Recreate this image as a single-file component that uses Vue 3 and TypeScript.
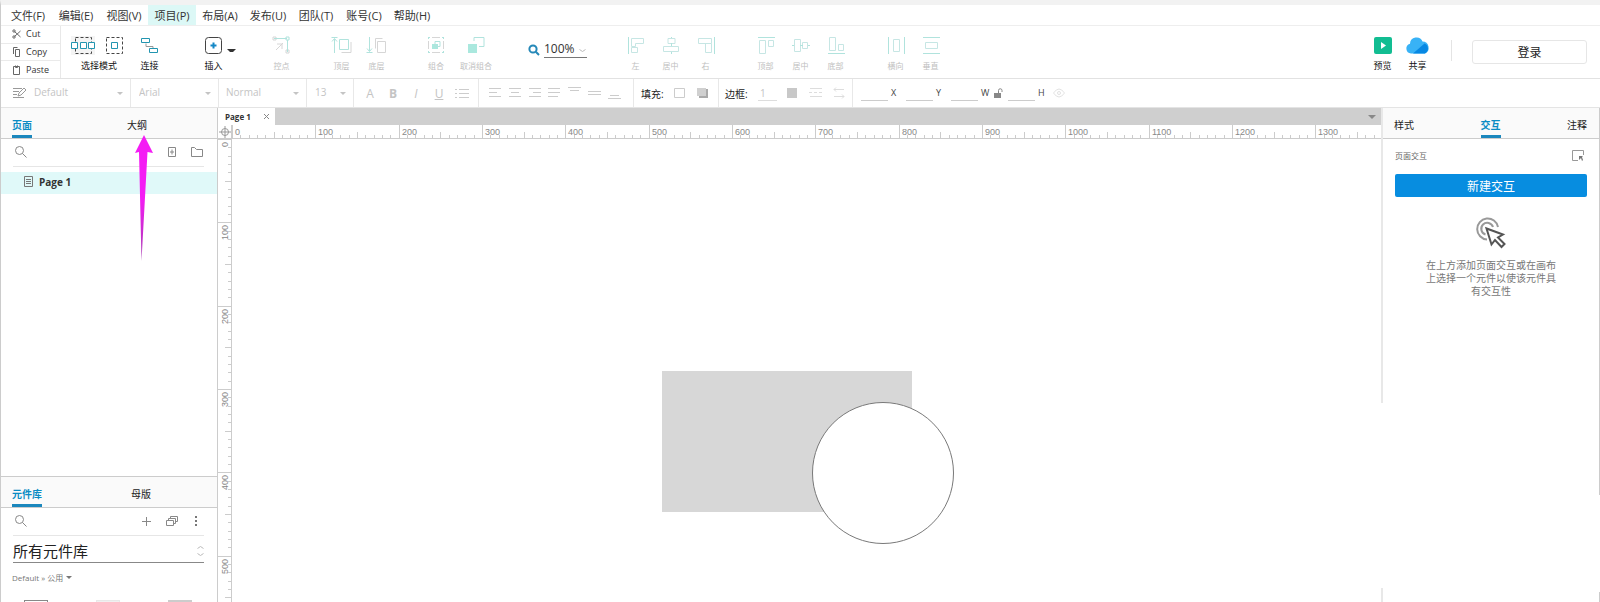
<script setup lang="ts">
import { computed, onBeforeUnmount, onMounted, ref } from 'vue'

interface Tool { label: string; main: string; soft?: string; fill?: string }
interface ToolGroup { name: string; tools: Tool[] }

const menus: string[] = ['文件(F)', '编辑(E)', '视图(V)', '项目(P)', '布局(A)', '发布(U)', '团队(T)', '账号(C)', '帮助(H)']
const activeMenu = ref(3)

const groups: ToolGroup[] = [
  { name: 'point', tools: [
    { label: '控点', main: 'M4 2.5h13M17.5 4v12M16 1h3v3h-3z', soft: 'M6 14l7-7M7 8l5 0 0 5M3 1h3v3H3zM16 14h3v3h-3z' },
  ] },
  { name: 'order', tools: [
    { label: '顶层', main: 'M4.5 17V3M2 5.5l2.5-3 2.500 3M1.500 1.500h6M9.500 3.500h9v10h-9z', soft: 'M11.500 16.500h9.500V6' },
    { label: '底层', main: 'M4.500 1v14M2 12.500l2.500 3 2.500-3M1.500 16.500h6', soft: 'M10.500 12.500V2.500h7M12.500 5.500h8v11h-8z' },
  ] },
  { name: 'combine', tools: [
    { label: '组合', main: 'M4 1.500h2M18 1.500h2M4 16.500h2M18 16.500h2M4.500 1v2M19.500 1v2M4.500 15v2M19.500 15v2M11 5.500h5v5h-5z', soft: 'M8 1.500h8M8 16.500h8M4.500 5v8M19.500 5v8', fill: 'M8 8h6v5H8z' },
    { label: '取消组合', main: 'M10 5V1.500h10v9h-5', fill: 'M4 8h9v9H4z' },
  ] },
]

const alignGroups: ToolGroup[] = [
  { name: 'halign', tools: [
    { label: '左', main: 'M4.500 1v17', soft: 'M7.500 2.500h12v5h-8v3h-4zM7.500 11.500h6v5h-6z' },
    { label: '居中', main: 'M12.500 1v1M12.500 7v3M12.500 16v2', soft: 'M9 2.500h7v5H9zM4.500 10.500h15v5h-15z' },
    { label: '右', main: 'M20.500 1v17', soft: 'M4.500 2.500h13v5h-13zM11.500 7.500v9h6v-9' },
  ] },
  { name: 'valign', tools: [
    { label: '顶部', main: 'M4 1.500h17', soft: 'M5.500 4.500h6v13h-6zM14.500 4.500h5v6h-5z' },
    { label: '居中', main: 'M3 9.500h2M11 9.500h3M19 9.500h2', soft: 'M5.500 3.500h6v12h-6zM13.500 6.500h5v6h-5z' },
    { label: '底部', main: 'M4 17.500h17', soft: 'M5.500 1.500h6v13h-6zM14.500 8.500h5v6h-5z' },
  ] },
  { name: 'spread', tools: [
    { label: '横向', main: 'M4.500 1v17M20.500 1v17', soft: 'M9.500 3.500h6v12h-6z' },
    { label: '垂直', main: 'M4 1.500h17M4 17.500h17', soft: 'M6.500 6.500h12v6h-12z' },
  ] },
]

const textAligns: string[] = [
  'M0 1.500h12M0 5.500h8M0 9.500h12',
  'M0 1.500h12M2 5.500h8M0 9.500h12',
  'M0 1.500h12M4 5.500h8M0 9.500h12',
  'M0 1.500h12M0 5.500h12M0 9.500h10',
]
const verticalAligns: string[] = ['M0 .5h13M2 3.500h9', 'M0 4.500h13M0 7.500h13', 'M2 8.500h9M0 11.500h13']
const dimensions: string[] = ['X', 'Y', 'W', 'H']

const STEP = 250 / 3
interface Mark { at: number; size: number; label: string }

function marksFor(length: number): Mark[] {
  const count = Math.ceil((length * 10) / STEP)
  return Array.from({ length: count }, (_, i) => {
    const at = Math.round((i * STEP) / 10)
    return {
      at,
      size: i % 10 === 0 ? 14 : i % 5 === 0 ? 7 : 4,
      label: i % 10 === 0 && at + 28 < length ? String(i * 10) : '',
    }
  })
}

const canvas = ref<HTMLElement | null>(null)
const canvasWidth = ref(0)
const canvasHeight = ref(0)
const columns = computed(() => marksFor(canvasWidth.value))
const rows = computed(() => marksFor(canvasHeight.value))

function measure(): void {
  canvasWidth.value = canvas.value?.clientWidth ?? 0
  canvasHeight.value = canvas.value?.clientHeight ?? 0
}
onMounted(() => {
  measure()
  window.addEventListener('resize', measure)
})
onBeforeUnmount(() => window.removeEventListener('resize', measure))

const leftTab = ref('页面')
const libTab = ref('元件库')
const rightTab = ref('交互')
const rightTabs: string[] = ['样式', '交互', '注释']
</script>

<template>
  <div class="app">
    <nav class="menubar">
      <button v-for="(m, i) in menus" :key="m" :class="{ active: i === activeMenu }" @click="activeMenu = i">{{ m }}</button>
    </nav>

    <div class="toolbar">
      <div class="clipboard">
        <button>
          <svg width="10" height="10" viewBox="0 0 10 10"><path d="M2.500 2.500l6 5.500M2.500 7.500l6-5.500" /><circle cx="2" cy="2" r="1.200" /><circle cx="2" cy="8" r="1.200" /></svg>Cut
        </button>
        <button>
          <svg width="10" height="10" viewBox="0 0 10 10"><path d="M3.500 2.500h4v7h-4zM1.500 7V.500h4" /></svg>Copy
        </button>
        <button>
          <svg width="10" height="10" viewBox="0 0 10 10"><path d="M1.500 1.500h6v8h-6zM3.500 .500v2h2v-2" /></svg>Paste
        </button>
      </div>

      <div class="modes">
        <div class="mode-icons">
          <button class="chosen" aria-label="相交选中">
            <svg width="24" height="19" viewBox="0 0 24 19">
              <path class="ink dash" d="M4.500 1.500h16v16h-16z" />
              <path class="blue solid" d="M.5 6.500h6v6h-6zM9.500 6.500h6v6h-6zM17.500 6.500h6v6h-6z" />
            </svg>
          </button>
          <button aria-label="包含选中">
            <svg width="18" height="19" viewBox="0 0 18 19">
              <path class="ink dash" d="M.5 1.500h16v16H.5z" />
              <path class="blue" d="M5.500 6.500h6v6h-6z" />
            </svg>
          </button>
        </div>
        <span>选择模式</span>
      </div>
      <button class="tool dark">
        <svg width="24" height="19" viewBox="0 0 24 19">
          <path class="ink thin" d="M8 7.500v3h7v2" />
          <path class="blue" d="M3.500 2.500h8v4h-8zM11.500 12.500h8v4h-8z" />
        </svg>
        <span>连接</span>
      </button>
      <div class="insert">
        <button class="tool dark">
          <svg width="24" height="19" viewBox="0 0 24 19">
            <rect class="ink" x="3.500" y="1.500" width="16" height="16" rx="3" />
            <path class="plus" d="M11.500 6.500v6M8.500 9.500h6" />
          </svg>
          <span>插入</span>
        </button>
        <button class="more" aria-label="更多插入"><i class="caret"></i></button>
      </div>

      <div v-for="g in groups" :key="g.name" class="group" :class="g.name">
        <button v-for="t in g.tools" :key="t.label" class="tool off">
          <svg width="24" height="19" viewBox="0 0 24 19">
            <path v-if="t.fill" class="mass" :d="t.fill" />
            <path v-if="t.soft" class="soft" :d="t.soft" />
            <path class="teal" :d="t.main" />
          </svg>
          <span>{{ t.label }}</span>
        </button>
      </div>

      <label class="zoom">
        <svg width="12" height="12" viewBox="0 0 12 12"><circle cx="5" cy="5" r="3.600" /><path d="M7.800 7.800l3.200 3.200" /></svg>
        <select aria-label="缩放"><option>100%</option></select>
        <svg class="chev" width="7" height="4" viewBox="0 0 7 4"><path d="M.5 .5l3 2 3-2" /></svg>
      </label>

      <div v-for="g in alignGroups" :key="g.name" class="group" :class="g.name">
        <button v-for="t in g.tools" :key="t.label" class="tool off">
          <svg width="24" height="19" viewBox="0 0 24 19">
            <path class="pale" :d="t.soft" />
            <path class="teal" :d="t.main" />
          </svg>
          <span>{{ t.label }}</span>
        </button>
      </div>

      <div class="account">
        <button class="tool dark">
          <svg width="24" height="19" viewBox="0 0 24 19">
            <rect x="3" y="1" width="18" height="17" rx="2" fill="#12bd92" /><path d="M10 6l5 3.500-5 3.500z" fill="#fff" />
          </svg>
          <span>预览</span>
        </button>
        <button class="tool dark">
          <svg width="26" height="19" viewBox="0 0 26 19">
            <path d="M6 17.500a5 5 0 0 1-1-9.800A6.500 6.500 0 0 1 17.500 5.500 6.300 6.300 0 0 1 20 17.500z" fill="#38b2f6" />
            <path d="M8 17.500L19.500 7.500A5.500 5.500 0 0 1 20 17.500z" fill="#0788e3" />
          </svg>
          <span>共享</span>
        </button>
        <i class="rule"></i>
        <button class="login">登录</button>
      </div>
    </div>

    <div class="stylebar">
      <div class="cell preset">
        <svg width="14" height="12" viewBox="0 0 14 12"><path d="M0 1.500h9M0 4.500h6M0 7.500h4M0 10.500h11M5 9l1-3 5-5 2 2-5 5z" /></svg>
        <select aria-label="样式"><option>Default</option></select><i class="caret"></i>
      </div>
      <div class="cell family"><select aria-label="字体"><option>Arial</option></select><i class="caret"></i></div>
      <div class="cell weight"><select aria-label="字型"><option>Normal</option></select><i class="caret"></i></div>
      <div class="cell size"><select aria-label="字号"><option>13</option></select><i class="caret"></i></div>
      <div class="cell glyphs">
        <button aria-label="颜色">A</button>
        <button aria-label="粗体"><b>B</b></button>
        <button aria-label="斜体"><em>I</em></button>
        <button aria-label="下划线"><u>U</u></button>
        <button aria-label="列表"><svg width="14" height="12" viewBox="0 0 14 12"><path d="M0 2.500h2M4 2.500h10M0 6.500h2M4 6.500h10M0 10.500h2M4 10.500h10" /></svg></button>
      </div>
      <div class="cell aligns">
        <button v-for="d in textAligns" :key="d" aria-label="对齐"><svg width="13" height="12" viewBox="0 0 13 12"><path :d="d" /></svg></button>
        <button v-for="d in verticalAligns" :key="d" aria-label="垂直对齐"><svg width="13" height="12" viewBox="0 0 13 12"><path :d="d" /></svg></button>
      </div>
      <div class="cell fillcell">
        <span class="caption">填充:</span>
        <button aria-label="填充颜色"><svg width="12" height="12" viewBox="0 0 12 12"><path d="M.5 1.500h10v9H.5z" /></svg></button>
        <button aria-label="阴影"><svg width="12" height="12" viewBox="0 0 12 12"><path d="M2 2h9v9H2z" fill="#aaa" /><path d="M0 1h9v8H0z" fill="#d0d0d0" /></svg></button>
      </div>
      <div class="cell bordercell">
        <span class="caption">边框:</span>
        <input class="stroke" aria-label="边框宽度" value="1" />
        <button aria-label="边框颜色"><svg width="12" height="12" viewBox="0 0 12 12"><path d="M0 1h10v10H0z" fill="#c8c8c8" /></svg></button>
        <button aria-label="线型"><svg class="faint" width="14" height="12" viewBox="0 0 14 12"><path d="M1 1.500h12M0 5.500h3M5 5.500h3M10 5.500h3M1 9.500h12" /></svg></button>
        <button aria-label="箭头"><svg class="faint" width="14" height="12" viewBox="0 0 14 12"><path d="M3 .5l-2 2 2 2M1 2.500h10M1 9.500h10M9 7.500l2 2-2 2" /></svg></button>
      </div>
      <div class="cell dims">
        <template v-for="d in dimensions" :key="d">
          <label class="dim"><input :aria-label="d" /><span>{{ d }}</span></label>
          <button v-if="d === 'W'" class="lock" aria-label="锁定比例">
            <svg width="9" height="10" viewBox="0 0 9 10"><path d="M0 5h7v5H0z" fill="#888" /><path d="M4.500 5V2.500a1.700 1.700 0 0 1 3.500 0V4" stroke="#888" /></svg>
          </button>
        </template>
        <button aria-label="可见性"><svg class="eye" width="12" height="12" viewBox="0 0 12 12"><path d="M.5 6q5.500-8 11 0-5.500 8-11 0z" /><circle cx="6" cy="6" r="1.500" /></svg></button>
      </div>
    </div>

    <main class="work">
      <aside class="left">
        <section class="pages">
          <div class="tabs">
            <button :class="{ on: leftTab === '页面' }" @click="leftTab = '页面'">页面</button>
            <button :class="{ on: leftTab === '大纲' }" @click="leftTab = '大纲'">大纲</button>
          </div>
          <div class="tools">
            <button aria-label="搜索"><svg width="14" height="14" viewBox="0 0 14 14"><circle cx="6.500" cy="5.500" r="4" /><path d="M9.500 8.500l4 4" /></svg></button>
            <button class="end" aria-label="添加页面"><svg width="12" height="12" viewBox="0 0 12 12"><path d="M2.500 1.500h7v9h-7zM6 3.500v5M4 6h4" /></svg></button>
            <button aria-label="添加文件夹"><svg width="12" height="12" viewBox="0 0 12 12"><path d="M.5 10.500v-9h3l2 2h6v7z" /></svg></button>
          </div>
          <a class="page" href="#page-1">
            <svg width="11" height="12" viewBox="0 0 11 12"><path d="M1.500 .5h8v10h-8zM3 3.500h5M3 5.500h5M3 7.500h5" /></svg>Page 1
          </a>
          <svg class="pointer" width="20" height="128" viewBox="0 0 20 128">
            <defs><linearGradient id="tail" x1="0" y1="0" x2="0" y2="1"><stop offset="0.500" stop-color="#f41cf4" /><stop offset="1" stop-color="#a63cb0" /></linearGradient></defs>
            <path d="M10 1L19 19l-5.500-1L7.500 127 5 18 1 19z" fill="url(#tail)" />
          </svg>
        </section>
        <section class="library">
          <div class="tabs">
            <button :class="{ on: libTab === '元件库' }" @click="libTab = '元件库'">元件库</button>
            <button :class="{ on: libTab === '母版' }" @click="libTab = '母版'">母版</button>
          </div>
          <div class="tools">
            <button aria-label="搜索元件"><svg width="14" height="14" viewBox="0 0 14 14"><circle cx="6.500" cy="5.500" r="4" /><path d="M9.500 8.500l4 4" /></svg></button>
            <button class="end" aria-label="添加元件库"><svg width="12" height="12" viewBox="0 0 12 12"><path d="M5.500 2v9M1 6.500h9" /></svg></button>
            <button aria-label="元件库"><svg width="12" height="12" viewBox="0 0 12 12"><path d="M.5 5.500h7v5h-7zM2.500 5.500v-2h7v5h-2M4.500 3.500v-2h7v5h-2" /></svg></button>
            <button aria-label="选项"><svg width="12" height="12" viewBox="0 0 12 12"><path d="M4 1h2v2H4zM4 5h2v2H4zM4 9h2v2H4z" class="dots" /></svg></button>
          </div>
          <label class="pick">
            <select aria-label="元件库选择"><option>所有元件库</option></select>
            <svg width="7" height="12" viewBox="0 0 7 12"><path d="M.5 3.500l3-2 3 2M.5 8.500l3 2 3-2" /></svg>
          </label>
          <button class="category">Default » 公用 <i class="caret"></i></button>
          <div class="thumbs"><i class="box"></i><i class="box light"></i><i class="box mid"></i></div>
        </section>
      </aside>

      <section class="stage">
        <div class="filetabs">
          <div class="file"><b>Page 1</b><button aria-label="关闭"><svg width="7" height="7" viewBox="0 0 7 7"><path d="M1 1l5 5M6 1L1 6" /></svg></button></div>
          <button class="drop" aria-label="页面列表"><i class="caret"></i></button>
        </div>
        <div class="corner"><svg width="12" height="12" viewBox="0 0 12 12"><circle cx="6" cy="6" r="3.500" /><path d="M6 0v12M0 6h12" /></svg></div>
        <svg class="ruler top" width="100%" height="14">
          <g v-for="m in columns" :key="m.at">
            <path :d="`M${m.at + 0.5} ${14 - m.size}v${m.size}`" />
            <text v-if="m.label" :x="m.at + 3" y="10">{{ m.label }}</text>
          </g>
        </svg>
        <svg class="ruler side" width="14" height="100%">
          <g v-for="m in rows" :key="m.at">
            <path :d="`M${14 - m.size} ${m.at + 0.5}h${m.size}`" />
            <text v-if="m.label" text-anchor="end" :transform="`translate(10 ${m.at + 3}) rotate(-90)`">{{ m.label }}</text>
          </g>
        </svg>
        <div ref="canvas" class="canvas">
          <div class="shape rect"></div>
          <div class="shape circle"></div>
        </div>
      </section>

      <aside class="inspector">
        <div class="tabs">
          <button v-for="t in rightTabs" :key="t" :class="{ on: t === rightTab }" @click="rightTab = t">{{ t }}</button>
        </div>
        <div class="body">
          <div class="title">
            <span>页面交互</span>
            <button aria-label="目标"><svg width="13" height="13" viewBox="0 0 13 13"><path d="M6 11.500H.5v-10h11V6" /><path d="M7 7h4l-1 1 1 3-1 1-1-3-2 2z" class="dots" /></svg></button>
          </div>
          <button class="primary">新建交互</button>
          <svg class="click" width="32" height="32" viewBox="0 0 32 32">
            <path d="M12 22.500A10.500 10.500 0 1 1 23 10" class="ring" /><path d="M10.500 17.500A6 6 0 1 1 18 10" class="ring" />
            <path d="M11.500 11.500l5 16 3.500-4.500 6.500 7 3-3-6.500-6.500 5-3z" class="cursor" />
          </svg>
          <p>在上方添加页面交互或在画布上选择一个元件以使该元件具有交互性</p>
        </div>
      </aside>
    </main>
  </div>
</template>

<style>
body { margin: 0; background: #fff; }
</style>

<style scoped>
* { box-sizing: border-box; }
.app {
  height: 100vh; display: flex; flex-direction: column; overflow: hidden;
  border-top: 5px solid #f2f2f2; border-left: 1px solid #ccc;
  font-family: "Open Sans", "Noto Sans CJK SC", sans-serif; font-size: 10px; color: #333; background: #fff;
}
button, input, select { font: inherit; color: inherit; background: none; border: 0; padding: 0; margin: 0; outline: 0; border-radius: 0; }
select { appearance: none; }
svg { fill: none; flex: none; display: block; }
i { font-style: normal; }
.caret { display: block; flex: none; border: 3px solid transparent; border-top-color: currentColor; border-bottom: 0; }

.menubar { display: flex; flex: none; height: 21px; padding-left: 3px; border-bottom: 1px solid #eee; font-size: 11px; }
.menubar button { width: 48px; height: 20px; white-space: nowrap; }
.menubar .active { background: #dcf8f6; }

.toolbar { display: flex; flex: none; height: 53px; border-bottom: 1px solid #e2e2e2; }
.clipboard { width: 60px; display: flex; flex-direction: column; border-right: 1px solid #e8e8e8; font-size: 9px; line-height: 12px; }
.clipboard button { flex: 1; display: flex; align-items: center; gap: 4px; padding: 0 0 0 11px; border-bottom: 1px solid #eaeaea; }
.clipboard button:last-child { border-bottom: 0; }
.clipboard svg { stroke: #666; }
.modes { width: 60px; margin: 10px 3px 0 8px; text-align: center; font-size: 9px; line-height: 12px; color: #111; }
.mode-icons { display: flex; justify-content: space-between; padding: 0 5px 0 2px; margin-bottom: 5px; }
.chosen { background: #f4f4f4; }
.tool { width: 35px; padding-top: 10px; display: flex; flex-direction: column; align-items: center; gap: 5px; line-height: 12px; white-space: nowrap; }
.dark { font-size: 9px; color: #111; }
.off { font-size: 8px; color: #c0c0c0; }
.ink { stroke: #444; }
.dash { stroke-dasharray: 3 2; }
.thin { stroke: #999; }
.blue { stroke: #2295b0; }
.solid { fill: #fff; }
.plus { stroke: #1587c5; stroke-width: 2; }
.teal { stroke: #b0e3dd; }
.soft { stroke: #d6d6d6; }
.pale { stroke: #c6e6e4; }
.mass { fill: #aae8de; }
.insert { display: flex; margin-left: 29px; }
.more { width: 9px; margin-left: -4px; padding-bottom: 4px; color: #333; }
.group { display: flex; }
.point { margin-left: 28px; }
.order { margin-left: 25px; }
.combine { margin-left: 22px; }
.combine .tool { width: 40px; }
.zoom { width: 60px; margin: 13px 30px 0 32px; display: flex; align-items: flex-start; }
.zoom svg { stroke: #2588b8; stroke-width: 2; margin-top: 5px; }
.zoom select { width: 43px; height: 19px; margin-left: 4px; border-bottom: 1px solid #777; font-size: 12px; }
.zoom .chev { stroke: #bbb; stroke-width: 1; margin: 10px 0 0 -8px; }
.valign, .spread { margin-left: 25px; }
.account { display: flex; margin-left: auto; padding-right: 13px; }
.rule { width: 1px; height: 21px; margin: 14px 20px 0 16px; background: #e4e4e4; }
.login { width: 115px; height: 24px; margin-top: 14px; border: 1px solid #e6e6e6; border-radius: 3px; font-size: 12px; color: #222; }

.stylebar { display: flex; flex: none; height: 29px; border-bottom: 1px solid #e4e4e4; color: #c4c4c4; }
.stylebar svg { stroke: #ccc; }
.stylebar svg path[fill] { stroke: none; }
.stylebar .faint { stroke: #ddd; }
.stylebar .lock path[stroke] { stroke: #888; }
.cell { display: flex; flex: none; align-items: center; border-right: 1px solid #e8e8e8; padding: 0 7px; }
.cell select { flex: 1; min-width: 0; height: 15px; margin-bottom: 2px; }
.preset { width: 130px; padding-left: 12px; gap: 7px; }
.stylebar .preset svg { stroke: #999; }
.family { width: 88px; padding-left: 8px; }
.weight { width: 88px; }
.size { width: 47px; padding-left: 8px; }
.glyphs { width: 125px; padding: 0 6px; justify-content: space-between; font-size: 12px; }
.glyphs button { width: 20px; display: grid; place-items: center; }
.aligns { width: 155px; padding: 0 12px 0 10px; justify-content: space-between; }
.caption { flex: none; width: 25px; color: #222; font-size: 10px; white-space: nowrap; }
.fillcell { width: 85px; gap: 8px; }
.fillcell button:last-child { margin-left: 3px; }
.bordercell { width: 134px; gap: 8px; padding: 0 0 0 6px; }
.stroke { width: 19px; height: 16px; border-bottom: 1px solid #ddd; padding-left: 2px; }
.bordercell button { margin-left: 2px; }
.dims { border-right: 0; gap: 9px; color: #444; font-size: 9px; line-height: 12px; padding-left: 8px; }
.dim { display: flex; align-items: center; gap: 3px; }
.dim span { width: 6px; }
.dim input { width: 27px; height: 16px; border-bottom: 1px solid #ccc; }
.lock { margin: 0 -4px 0 -2px; }
.stylebar .eye { stroke: #e2e2e2; }

.work { flex: 1; min-height: 0; display: flex; }
.tabs { display: flex; height: 31px; background: #fafafa; border-bottom: 1px solid #ccc; color: #222; }
.tabs button { height: 30px; padding-top: 5px; border-bottom: 3px solid transparent; }
.tabs .on { color: #0b8cc4; border-color: #1b87bd; font-weight: bold; }
.left { width: 217px; flex: none; display: flex; flex-direction: column; border-right: 1px solid #ccc; }
.left .tabs { padding: 0 70px 0 11px; justify-content: space-between; }
.pages { flex: 1; min-height: 0; position: relative; }
.tools { height: 28px; margin: 0 13px 0 12px; padding: 0 1px 2px 0; border-bottom: 1px solid #e6e6e6; display: flex; align-items: center; gap: 13px; }
.tools svg { stroke: #888; }
.dots { fill: #777; stroke: none; }
.tools .end { margin-left: auto; }
.page { display: flex; align-items: center; gap: 5px; height: 22px; margin-top: 5px; padding: 0 0 2px 22px; background: #e0f9f9; color: #333; font-weight: bold; text-decoration: none; }
.page svg { stroke: #777; }
.pointer { position: absolute; left: 133px; top: 26px; }
.library { flex: 0 0 126px; overflow: hidden; border-top: 1px solid #ccc; }
.library .tabs { padding-right: 66px; }
.pick { display: flex; align-items: center; height: 24px; margin: 3px 13px 0 12px; border-bottom: 1px solid #888; }
.pick select { flex: 1; font-size: 15px; color: #222; }
.pick svg { stroke: #bbb; }
.category { display: flex; align-items: center; gap: 3px; height: 14px; margin: 7px 0 0 11px; font-size: 8px; color: #777; }
.thumbs { display: flex; gap: 48px; margin: 16px 0 0 23px; }
.box { width: 24px; height: 14px; border: 1px solid #888; }
.light { background: #f0f0f0; border-color: #e8e8e8; }
.mid { background: #ccc; border-color: #ccc; }

.stage { flex: 1; min-width: 0; display: grid; grid-template: 17px 14px 1fr / 14px 1fr; }
.filetabs { grid-column: 1 / 3; display: flex; justify-content: space-between; background: #cfcfcf; }
.file { width: 57px; padding: 0 5px 0 7px; display: flex; align-items: center; justify-content: space-between; background: #fff; font-size: 8px; }
.file b { padding-bottom: 1px; }
.file svg { stroke: #888; }
.drop { width: 18px; display: grid; place-items: center; color: #888; }
.drop .caret { border-width: 4px 4px 0; }
.corner { border-right: 1px solid #ccc; border-bottom: 1px solid #ccc; display: grid; place-items: center; }
.corner svg { stroke: #999; }
.ruler { stroke: #ccc; overflow: hidden; }
.ruler text { stroke: none; fill: #888; font-family: "Liberation Sans", Arial, sans-serif; font-size: 9px; }
.top { border-bottom: 1px solid #ccc; }
.side { border-right: 1px solid #ccc; min-height: 0; }
.canvas { position: relative; overflow: hidden; }
.shape { position: absolute; }
.rect { left: 430px; top: 232px; width: 250px; height: 141px; background: #d7d7d7; }
.circle { left: 580px; top: 263px; width: 142px; height: 142px; border: 1px solid #797979; border-radius: 50%; background: #fff; }

.inspector {
  width: 219px; flex: none; padding: 0 1px 0 2px;
  background:
    linear-gradient(#e8e8e8 295px, transparent 295px, transparent 480px, #e8e8e8 480px) left / 2px 100% no-repeat,
    linear-gradient(#ccc 387px, transparent 387px, transparent 484px, #ccc 484px) right / 1px 100% no-repeat;
}
.inspector .tabs { padding: 0 12px 0 11px; justify-content: space-between; }
.body { padding: 0 12px; display: flex; flex-direction: column; align-items: center; }
.title { align-self: stretch; height: 35px; padding: 0 2px 3px 0; display: flex; align-items: center; justify-content: space-between; font-size: 8px; color: #666; }
.title svg { stroke: #999; }
.primary { align-self: stretch; height: 23px; background: #078de0; color: #fff; border-radius: 2px; font-size: 12px; }
.click { margin-top: 20px; }
.ring { stroke: #999; stroke-width: 2; }
.cursor { stroke: #555; stroke-width: 2; fill: #fff; }
p { width: 130px; margin: 10px 0 0; line-height: 13px; text-align: center; color: #777; }
</style>
